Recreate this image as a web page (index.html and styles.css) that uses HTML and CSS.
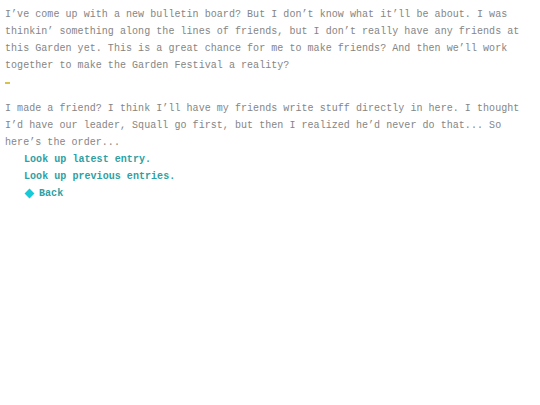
FILE: index.html
```html
<!DOCTYPE html>
<html>
<head>
<meta charset="utf-8">
<link rel="stylesheet" href="styles.css">
</head>
<body>
<div class="board">
  <p class="text">I’ve come up with a new bulletin board? But I don’t know what it’ll be about. I was<br>thinkin’ something along the lines of friends, but I don’t really have any friends at<br>this Garden yet. This is a great chance for me to make friends? And then we’ll work<br>together to make the Garden Festival a reality?</p>
  <div class="cursor-line"><span class="cursor"></span></div>
  <p class="text second">I made a friend? I think I’ll have my friends write stuff directly in here. I thought<br>I’d have our leader, Squall go first, but then I realized he’d never do that... So<br>here’s the order...</p>
  <ul class="menu">
    <li class="item">Look up latest entry.</li>
    <li class="item">Look up previous entries.</li>
    <li class="item selected"><span class="diamond"></span>Back</li>
  </ul>
</div>
</body>
</html>
```
FILE: styles.css
```css
html, body {
  margin: 0;
  padding: 0;
  background: #ffffff;
}
.board {
  padding: 6px 0 0 5px;
  font-family: "Liberation Mono", "DejaVu Sans Mono", monospace;
  font-size: 10px;
  letter-spacing: 0.05px;
  line-height: 17px;
  color: #858585;
}
.text {
  margin: 0;
  white-space: nowrap;
}
.cursor-line {
  height: 17px;
  display: flex;
  align-items: center;
}
.cursor {
  display: block;
  width: 5px;
  height: 2px;
  background: #d8c24a;
  margin-top: 1px;
}
.second {
  margin-top: 9px;
}
.menu {
  list-style: none;
  margin: 0;
  padding: 0 0 0 19px;
  color: #2f9fa3;
  font-weight: bold;
}
.item {
  display: flex;
  align-items: center;
  height: 17px;
}
.diamond {
  width: 7px;
  height: 7px;
  background: #19c9d6;
  transform: rotate(45deg);
  margin: 0 6px 0 2px;
}
```
